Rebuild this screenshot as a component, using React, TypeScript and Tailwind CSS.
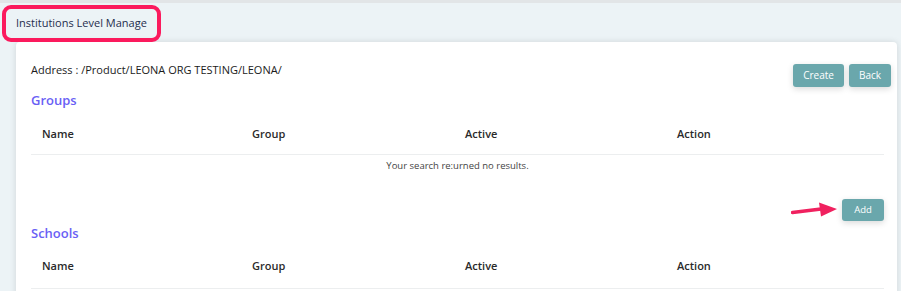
import { useMemo } from 'react';

const columns = ['Name', 'Group', 'Active', 'Action'];

const font = { fontFamily: '"Open Sans", "Noto Sans", sans-serif' };

const TableHead = ({ spacing }: { spacing: string }) => (
  <div className={`grid grid-cols-[210px_213px_212px_1fr] border-b border-[#eceeef] pl-[11px] text-[11px] leading-[15px] font-semibold text-[#2a2a2a] ${spacing}`}>
    {columns.map((c) => (
      <div key={c}>{c}</div>
    ))}
  </div>
);

const Arrow = () => (
  <svg width="47" height="16" viewBox="0 0 47 16" className="mr-[4px]">
    <path d="M1.5 10.5 L30 7" stroke="#f0215f" strokeWidth="3.5" strokeLinecap="round" />
    <path d="M28 0.5 L46 7 L30 14.5 Z" fill="#f0215f" />
  </svg>
);

const btn = 'rounded-[3px] bg-[#6aa7ac] text-white shadow-[0_2px_6px_rgba(0,0,0,0.15)]';

const App = () => {
  const sections = useMemo(() => ['Groups', 'Schools'], []);

  return (
    <div className="h-[291px] w-[901px] overflow-hidden border-t-[3px] border-[#e2e5e7] bg-[#ecf3f6]" style={font}>
      <div className="flex h-[38px] items-center">
        <div className="ml-[2px] mt-[2px] flex h-[37px] items-center rounded-[9px] border-[4px] border-[#fb1a5d] px-[10px] text-[11px] text-[#1f2d4d]">
          Institutions Level Manage
        </div>
      </div>

      <div className="ml-[16px] mr-[4px] mt-[1px] h-[260px] rounded-[4px] bg-white pl-[15px] pr-[6px] pt-[18px] shadow-[0_0_6px_rgba(0,0,0,0.12)]">
        <div className="flex items-start justify-between">
          <div className="pt-[2px] text-[11px] text-[#1b1b1b]">Address : /Product/LEONA ORG TESTING/LEONA/</div>
          <div className="mt-[4px] flex gap-[5px]">
            <button className={`${btn} h-[23px] w-[51px] text-[10px]`}>Create</button>
            <button className={`${btn} h-[23px] w-[42px] text-[10px]`}>Back</button>
          </div>
        </div>

        <div className="mr-[7px]">
          <div className="mt-[4px] text-[13px] font-semibold text-[#6a5ff5]">{sections[0]}</div>
          <TableHead spacing="pt-[15px] pb-[13px]" />
          <div className="pt-[4px] text-center text-[9.5px] text-[#444]">Your search re:urned no results.</div>
          <div className="mt-[26px] flex items-center justify-end">
            <Arrow />
            <button className={`${btn} h-[22px] w-[42px] text-[9.5px]`}>Add</button>
          </div>
          <div className="mt-[3px] text-[13px] font-semibold text-[#6a5ff5]">{sections[1]}</div>
          <TableHead spacing="pt-[15px] pb-[15px]" />
        </div>
      </div>
    </div>
  );
};

export default App;
